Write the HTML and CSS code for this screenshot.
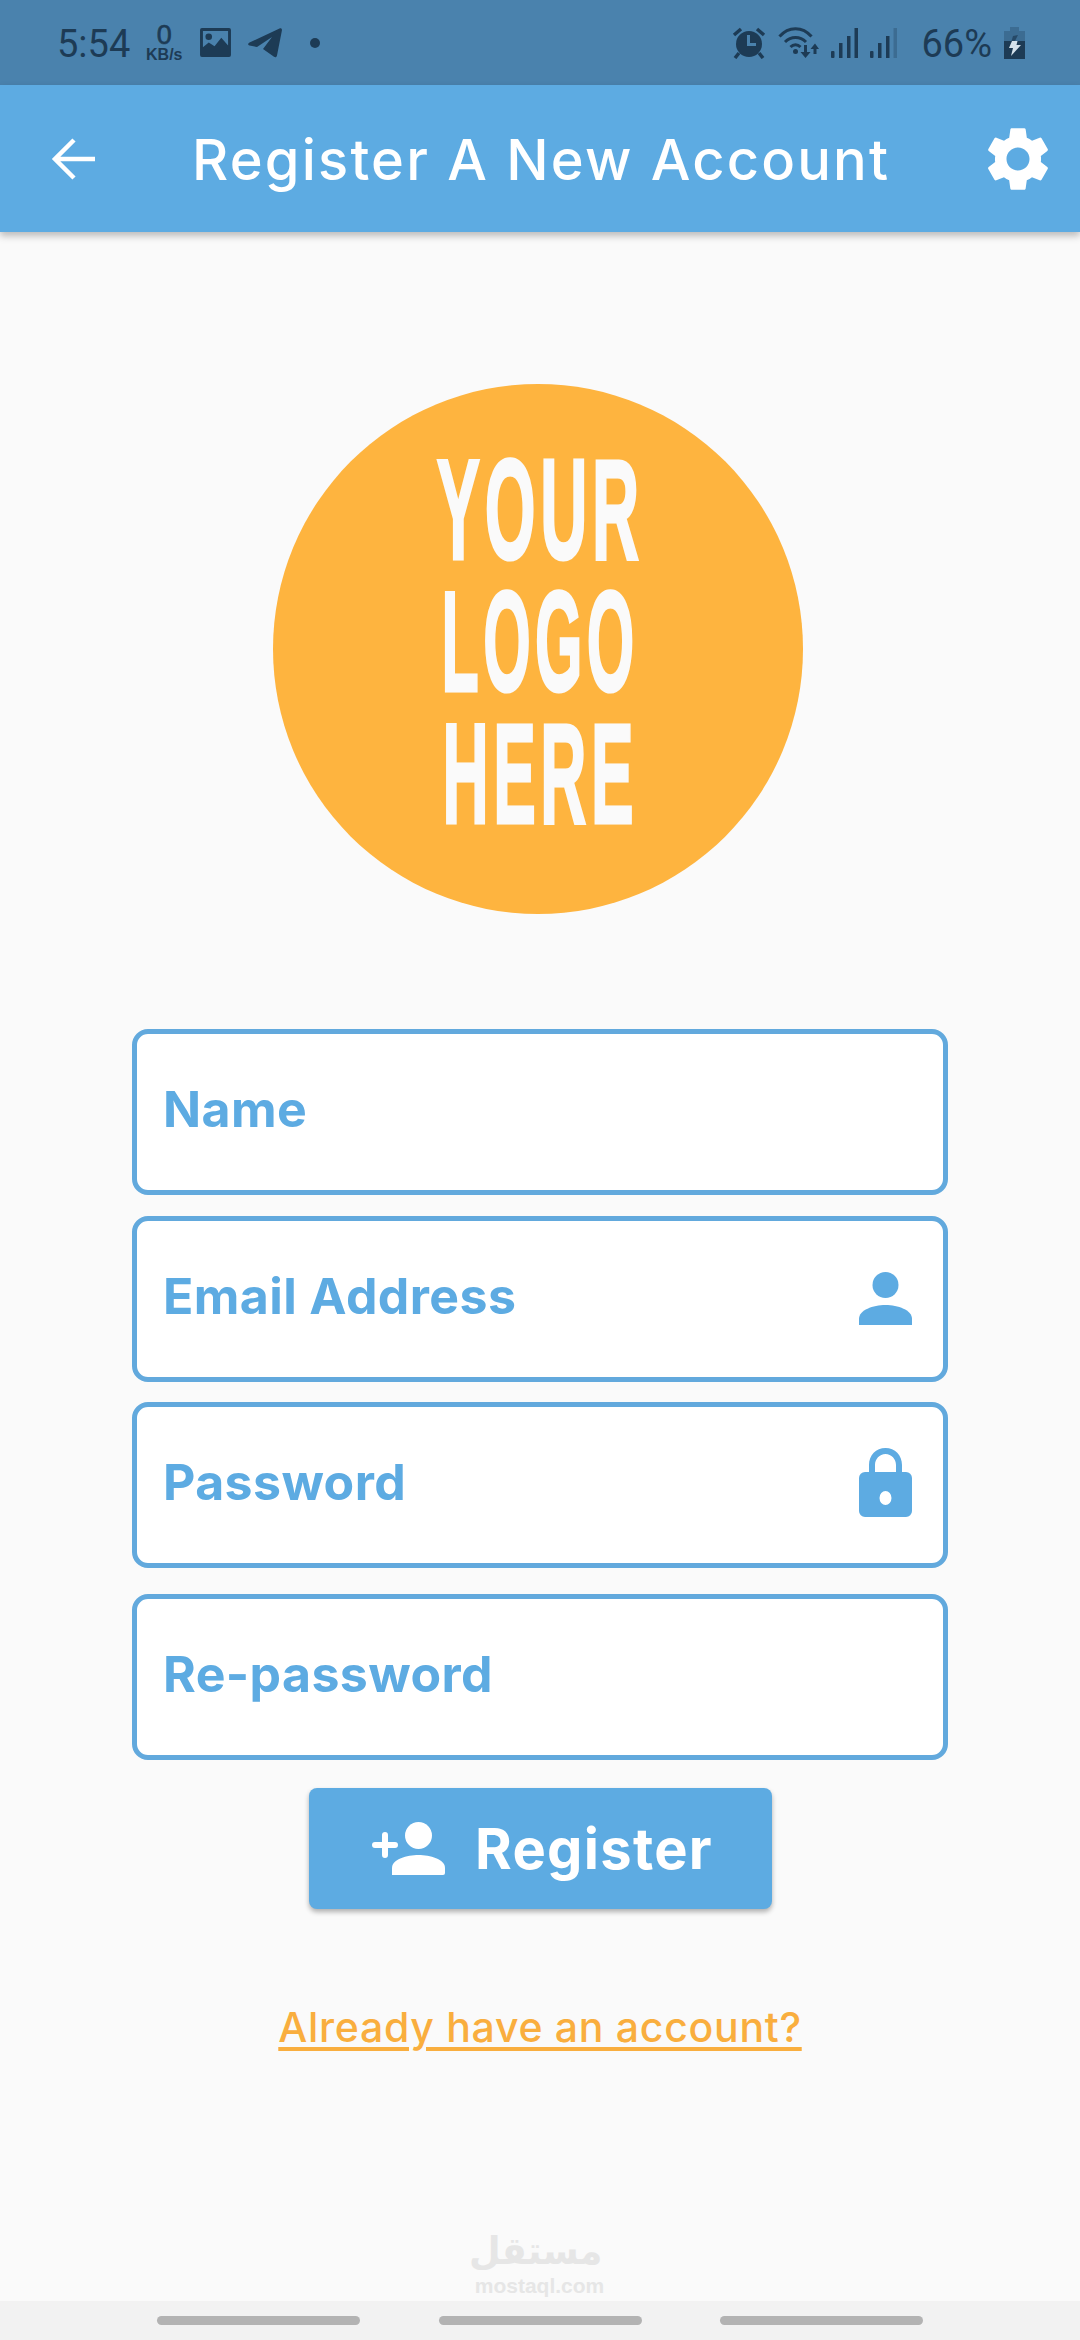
FILE: index.html
```html
<!DOCTYPE html>
<html lang="en">
<head>
    <meta charset="UTF-8">
    <meta name="viewport" content="width=device-width, initial-scale=1.0">
    <title>Register A New Account</title>
    <link rel="stylesheet" href="styles.css">
</head>
<body>
    <div class="page">
        <div class="status-bar">
            <div class="status-left">
                <span class="status-time">5:54</span>
                <span class="net-speed"><b>0</b><i>KB/s</i></span>
                <svg class="status-image" width="31" height="29" viewBox="0 0 32 30"><path fill-rule="evenodd" d="M2 0h28a2 2 0 0 1 2 2v26a2 2 0 0 1-2 2H2a2 2 0 0 1-2-2V2a2 2 0 0 1 2-2zM3 3v17l6-5 6 4 7-9 7 8V3z"/><circle cx="9" cy="9" r="3.400"/></svg>
                <svg class="status-plane" width="34" height="30" viewBox="0 0 34 30"><path d="M1.500 14.500 31.500.5c1.500-.6 2.700.3 2.400 1.900L29 27.500c-.3 1.700-1.700 2.200-3 1.300L15 21l9-12-15 10-7.500-1.500c-1.700-.4-1.800-2 0-3z"/></svg>
                <span class="status-dot"></span>
            </div>
            <div class="status-right">
                <svg width="34" height="32" viewBox="0 0 34 32"><circle cx="17" cy="17" r="13"/><path fill="none" stroke="#1d3b55" stroke-width="3.500" d="M2 8l7-6M32 8l-7-6M7 26l-4 5M27 26l4 5"/><path d="M15 8h3v8h6v3h-9z" fill="#4a82ad"/></svg>
                <svg width="41" height="31" viewBox="0 0 41 31"><path fill="none" stroke="#1d3b55" stroke-width="3" d="M1.500 9.500c9-10.500 23-10.500 32 0M7 15c6-6 15-6 21 0M12.500 20c3-3 7-3 10 0"/><circle cx="17.500" cy="24.500" r="2.500"/><path d="M26 18h3v7h3.500l-5 6-5-6H26zM35.500 27v-5h-3l4.500-5.500 4 5.500h-2.500v5z"/></svg>
                <svg width="27" height="30" viewBox="0 0 27 30"><rect x="0" y="23" width="3.500" height="7" rx="1"/><rect x="8" y="15" width="3.500" height="15"/><rect x="16" y="8" width="3.500" height="22"/><rect x="23.500" y="0" width="3.500" height="30"/></svg>
                <svg width="27" height="30" viewBox="0 0 27 30"><rect x="0" y="23" width="3.500" height="7" rx="1"/><rect x="8" y="15" width="3.500" height="15"/><rect x="16" y="8" width="3.500" height="22"/><rect x="23.500" y="0" width="3.500" height="30" opacity=".3"/></svg>
                <span class="status-battery">66%</span>
                <svg width="21" height="32" viewBox="0 0 21 32"><path d="M6 0h9v4h6v28H0V4h6z" opacity=".3"/><path d="M0 14h21v18H0z"/><path d="M14 8l-3 6H7.500L9 9z" opacity=".7"/><path d="M8 14h5.500l-1 4H17L7 29l2-8H5z" fill="#d5e2ec"/></svg>
            </div>
        </div>

        <div class="app-bar">
            <svg class="back-icon" width="44" height="44" viewBox="0 0 44 44"><path fill="none" stroke="#fff" stroke-width="4.500" d="M44 22H4M23 3 4 22l19 19"/></svg>
            <div class="app-title">Register A New Account</div>
            <svg class="gear-icon" width="62" height="64" viewBox="2.700 2 18.600 20"><path fill="#fff" d="M19.140 12.940c.04-.3.060-.61.060-.94 0-.32-.020-.64-.070-.94l2.030-1.580a.490.490 0 0 0 .120-.61l-1.920-3.320a.488.488 0 0 0-.590-.220l-2.390.960c-.500-.380-1.030-.700-1.620-.940l-.360-2.540a.484.484 0 0 0-.480-.410h-3.840c-.240 0-.430.170-.470.410l-.360 2.540c-.590.240-1.130.570-1.620.940l-2.390-.960c-.220-.080-.470 0-.590.220L2.740 8.870c-.120.210-.080.470.120.610l2.030 1.580c-.050.300-.090.630-.090.940s.020.640.070.940l-2.030 1.580a.490.490 0 0 0-.120.610l1.920 3.320c.120.220.370.290.590.220l2.390-.960c.500.380 1.030.700 1.620.940l.360 2.540c.050.240.240.410.480.410h3.840c.240 0 .440-.170.470-.410l.360-2.540c.590-.240 1.130-.560 1.620-.940l2.390.960c.220.080.470 0 .590-.220l1.920-3.320c.120-.220.070-.470-.120-.610l-2.010-1.580zM12 15.600c-1.980 0-3.600-1.620-3.600-3.600s1.620-3.600 3.600-3.600 3.600 1.620 3.600 3.600-1.620 3.600-3.600 3.600z"/></svg>
        </div>

        <div class="content">
            <div class="logo">
                <div class="logo-line logo-your">YOUR</div>
                <div class="logo-line logo-logo">LOGO</div>
                <div class="logo-line logo-here">HERE</div>
            </div>

            <form class="register-form">
                <div class="field">
                    <span class="field-label">Name</span>
                </div>
                <div class="field">
                    <span class="field-label">Email Address</span>
                    <svg class="field-icon" width="53" height="53" viewBox="0 0 53 53"><circle cx="26.500" cy="13" r="13"/><path d="M0 53V47C0 38 14 33 26.500 33S53 38 53 47v6z"/></svg>
                </div>
                <div class="field">
                    <span class="field-label">Password</span>
                    <svg class="field-icon field-icon-lock" width="53" height="69" viewBox="0 0 53 69"><path fill-rule="evenodd" d="M10 24v-7C10 7 17 0 26.500 0S43 7 43 17v7h4a6 6 0 0 1 6 6v33a6 6 0 0 1-6 6H6a6 6 0 0 1-6-6V30a6 6 0 0 1 6-6zm6 0h21v-7c0-6-4.500-11-10.500-11S16 11 16 17zm10.500 19a6 7 0 1 0 0 14 6 7 0 0 0 0-14z"/></svg>
                </div>
                <div class="field">
                    <span class="field-label">Re-password</span>
                </div>
            </form>

            <button class="register-btn" type="button">
                <svg width="73" height="53" viewBox="0 0 73 53"><circle cx="46.500" cy="13.500" r="13.500" fill="#fff"/><path fill="#fff" d="M20 53v-7c0-9 15-13 26.500-13S73 37 73 46v5a2 2 0 0 1-2 2z"/><path fill="none" stroke="#fff" stroke-width="6" stroke-linecap="round" d="M3 23h20M13 13v20"/></svg>
                <span>Register</span>
            </button>

            <a class="login-link" href="#">Already have an account?</a>
        </div>

        <div class="watermark">
            <div class="watermark-ar" dir="rtl">مستقل</div>
            <div class="watermark-en">mostaql.com</div>
        </div>

        <div class="nav-bar">
            <span class="nav-pill"></span>
            <span class="nav-pill"></span>
            <span class="nav-pill"></span>
        </div>
    </div>
</body>
</html>
```

FILE: styles.css
```css
* {
    margin: 0;
    padding: 0;
    box-sizing: border-box;
}
body {
    background-color: #fafafa;
    font-family: Inter, "Noto Sans", sans-serif;
}
.page {
    position: relative;
    width: 1080px;
    height: 2340px;
    display: flex;
    flex-direction: column;
    overflow: hidden;
}
.status-bar {
    height: 85px;
    flex-shrink: 0;
    background-color: #4a82ad;
    color: #1d3b55;
    fill: #1d3b55;
    display: flex;
    justify-content: space-between;
    align-items: center;
    padding: 0 55px 0 57px;
}
.status-left,
.status-right {
    display: flex;
    align-items: center;
}
.status-time {
    font-family: Roboto, sans-serif;
    font-size: 38px;
    line-height: 1;
    margin-top: 3px;
}
.net-speed {
    display: flex;
    flex-direction: column;
    align-items: center;
    width: 36px;
    margin-left: 16px;
    font-family: "Liberation Sans", sans-serif;
    line-height: 1;
}
.net-speed b {
    font-size: 27px;
    font-weight: 400;
    height: 25px;
    -webkit-text-stroke: 0.6px #1d3b55;
}
.net-speed i {
    font-size: 16px;
    font-style: normal;
    font-weight: 700;
}
.status-image {
    margin-left: 18px;
}
.status-plane {
    margin-left: 17px;
}
.status-dot {
    width: 10px;
    height: 10px;
    margin-left: 28px;
    border-radius: 50%;
    background-color: #1d3b55;
}
.status-right svg {
    margin-left: 12px;
}
.status-right svg:first-child {
    margin-left: 0;
}
.status-battery {
    font-family: Roboto, sans-serif;
    font-size: 38px;
    line-height: 1;
    margin-left: 24px;
    margin-top: 3px;
}
.app-bar {
    height: 147px;
    flex-shrink: 0;
    background-color: #5dabe2;
    display: flex;
    align-items: center;
    padding: 0 31px 0 51px;
    box-shadow: 0 4px 7px rgba(0, 0, 0, 0.25);
    z-index: 1;
}
.app-title {
    flex: 1;
    color: #fff;
    font-size: 56px;
    font-weight: 500;
    letter-spacing: 2.2px;
    margin-left: 97px;
    padding-top: 3px;
    line-height: 1;
}
.content {
    display: flex;
    flex-direction: column;
    align-items: center;
    padding-top: 152px;
}
.logo {
    width: 530px;
    height: 530px;
    border-radius: 50%;
    background-color: #feb43f;
    color: #fafafa;
    display: flex;
    flex-direction: column;
    align-items: center;
    justify-content: center;
    padding: 0 0 14px 5px;
    margin-left: -4px;
    margin-bottom: 115px;
}
.logo-line {
    font-family: "Liberation Sans", sans-serif;
    font-weight: 700;
    font-size: 142px;
    line-height: 132px;
    height: 132px;
    letter-spacing: 10px;
    -webkit-text-stroke: 3px #fafafa;
}
.logo-your {
    transform: scaleX(0.46);
}
.logo-logo {
    transform: scaleX(0.43);
}
.logo-here {
    transform: scaleX(0.45);
}
.register-form {
    width: 816px;
    display: flex;
    flex-direction: column;
    gap: 20px;
}
.field {
    height: 166px;
    flex-shrink: 0;
    background-color: #fff;
    border: 5px solid #62a9dd;
    border-radius: 16px;
    padding: 0 31px 7px 26px;
    display: flex;
    align-items: center;
    justify-content: space-between;
    color: #5dabe2;
    fill: #5dabe2;
}
.field:nth-child(1) {
    margin-bottom: 1px;
}
.field:nth-child(3) {
    margin-bottom: 6px;
}
.field-label {
    font-size: 50px;
    font-weight: 700;
    letter-spacing: 0.4px;
}
.field-icon {
    margin-top: 6px;
}
.field-icon-lock {
    margin-top: 2px;
}
.register-btn {
    width: 463px;
    height: 121px;
    margin-top: 28px;
    padding-left: 5px;
    background-color: #5dabe2;
    border: none;
    border-radius: 8px;
    box-shadow: 0 3px 5px rgba(0, 0, 0, 0.3);
    color: #fff;
    display: flex;
    align-items: center;
    justify-content: center;
    gap: 30px;
    font-family: inherit;
    font-size: 56px;
    font-weight: 700;
    letter-spacing: 1.3px;
}
.login-link {
    margin-top: 93px;
    color: #f9ae3e;
    font-size: 41px;
    font-weight: 500;
    letter-spacing: 0.7px;
    text-underline-offset: 5px;
}
.watermark {
    position: absolute;
    left: 474px;
    top: 2228px;
    width: 131px;
    text-align: center;
    color: #e6e6e6;
}
.watermark-ar {
    font-family: "DejaVu Sans", sans-serif;
    font-size: 38px;
    font-weight: 700;
    line-height: 46px;
    padding-left: 6px;
    white-space: nowrap;
    transform: scaleX(0.96);
}
.watermark-en {
    font-family: "Liberation Sans", sans-serif;
    font-size: 21px;
    font-weight: 700;
    line-height: 24px;
}
.nav-bar {
    margin-top: auto;
    height: 39px;
    flex-shrink: 0;
    background-color: #f2f2f2;
    display: flex;
    justify-content: center;
    gap: 78.500px;
    padding-top: 15px;
}
.nav-pill {
    width: 203px;
    height: 9px;
    border-radius: 5px;
    background-color: #b3b3b3;
}
```
